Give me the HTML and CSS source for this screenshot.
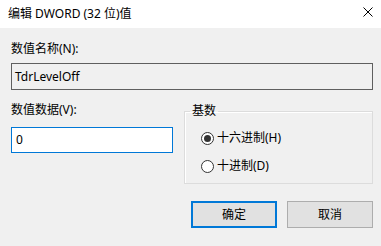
FILE: index.html
```html
<!DOCTYPE html>
<html lang="zh-CN">
<head>
<meta charset="utf-8">
<title>编辑 DWORD (32 位)值</title>
<link rel="stylesheet" href="styles.css">
</head>
<body>
<div class="dialog">
  <div class="titlebar">
    <span class="title">编辑 DWORD (32 位)值</span>
    <span class="close"><svg width="10" height="10" viewBox="0 0 10 10"><path d="M0.5 0.5 L9.5 9.5 M9.5 0.5 L0.5 9.5" stroke="#000" stroke-width="1" fill="none"/></svg></span>
  </div>
  <div class="content">
    <div class="label first">数值名称(N):</div>
    <div class="field readonly">TdrLevelOff</div>
    <div class="row">
      <div class="col-left">
        <div class="label">数值数据(V):</div>
        <div class="field edit">0</div>
      </div>
      <fieldset class="group">
        <legend>基数</legend>
        <div class="radio first-radio"><span class="dot checked"></span><span>十六进制(H)</span></div>
        <div class="radio"><span class="dot"></span><span>十进制(D)</span></div>
      </fieldset>
    </div>
    <div class="buttons">
      <div class="btn default">确定</div>
      <div class="btn">取消</div>
    </div>
  </div>
</div>
</body>
</html>
```
FILE: styles.css
```css
html, body {
  margin: 0;
  padding: 0;
}
body {
  width: 381px;
  height: 246px;
  background: #f0f0f0;
  font-family: "Noto Sans", "Noto Sans CJK SC", sans-serif;
  font-size: 12px;
  line-height: 16px;
  color: #000;
  overflow: hidden;
}
.dialog {
  width: 381px;
  height: 246px;
  background: #f0f0f0;
}
.titlebar {
  height: 28px;
  background: #fff;
  display: flex;
  align-items: flex-start;
  justify-content: space-between;
}
.title {
  padding-top: 6px;
  padding-left: 8px;
}
.close {
  margin-top: 7px;
  margin-right: 8px;
  width: 10px;
  height: 10px;
  display: flex;
}
.content {
  padding: 0 8px 0 11px;
}
.label.first {
  margin-top: 13px;
}
.field {
  box-sizing: border-box;
  border: 1px solid #5f5f5f;
  display: flex;
  align-items: center;
}
.field.readonly {
  margin-top: 6px;
  height: 27px;
  padding-left: 3px;
  background: #f0f0f0;
}
.row {
  display: flex;
  margin-top: 12px;
}
.col-left {
  width: 162px;
  flex: none;
}
.field.edit {
  margin-top: 9px;
  height: 26px;
  padding-left: 4px;
  background: #fff;
  border-color: #0078d7;
}
.group {
  flex: 1;
  margin: 0 0 0 11px;
  padding: 0 8px 9px 5px;
  border: 1px solid #dcdcdc;
  box-shadow: inset 1px 1px 0 #fff;
  min-inline-size: 0;
  height: 82px;
  box-sizing: border-box;
}
.group legend {
  padding: 0 2px;
  line-height: 18px;
}
.radio {
  display: flex;
  align-items: center;
  height: 16px;
  margin-left: 11px;
  margin-top: 12px;
}
.radio.first-radio {
  margin-top: 10px;
}
.dot {
  box-sizing: border-box;
  width: 13px;
  height: 13px;
  border: 1px solid #333;
  border-radius: 50%;
  background: #fff;
  margin-right: 3px;
  display: flex;
  align-items: center;
  justify-content: center;
}
.dot.checked::after {
  content: "";
  width: 7px;
  height: 7px;
  border-radius: 50%;
  background: #333;
}
.buttons {
  display: flex;
  justify-content: flex-end;
  gap: 10px;
  margin-top: 17px;
}
.btn {
  box-sizing: border-box;
  width: 86px;
  height: 27px;
  background: #e1e1e1;
  border: 1px solid #adadad;
  display: flex;
  align-items: center;
  justify-content: center;
}
.btn.default {
  border: 2px solid #0078d7;
}
```
